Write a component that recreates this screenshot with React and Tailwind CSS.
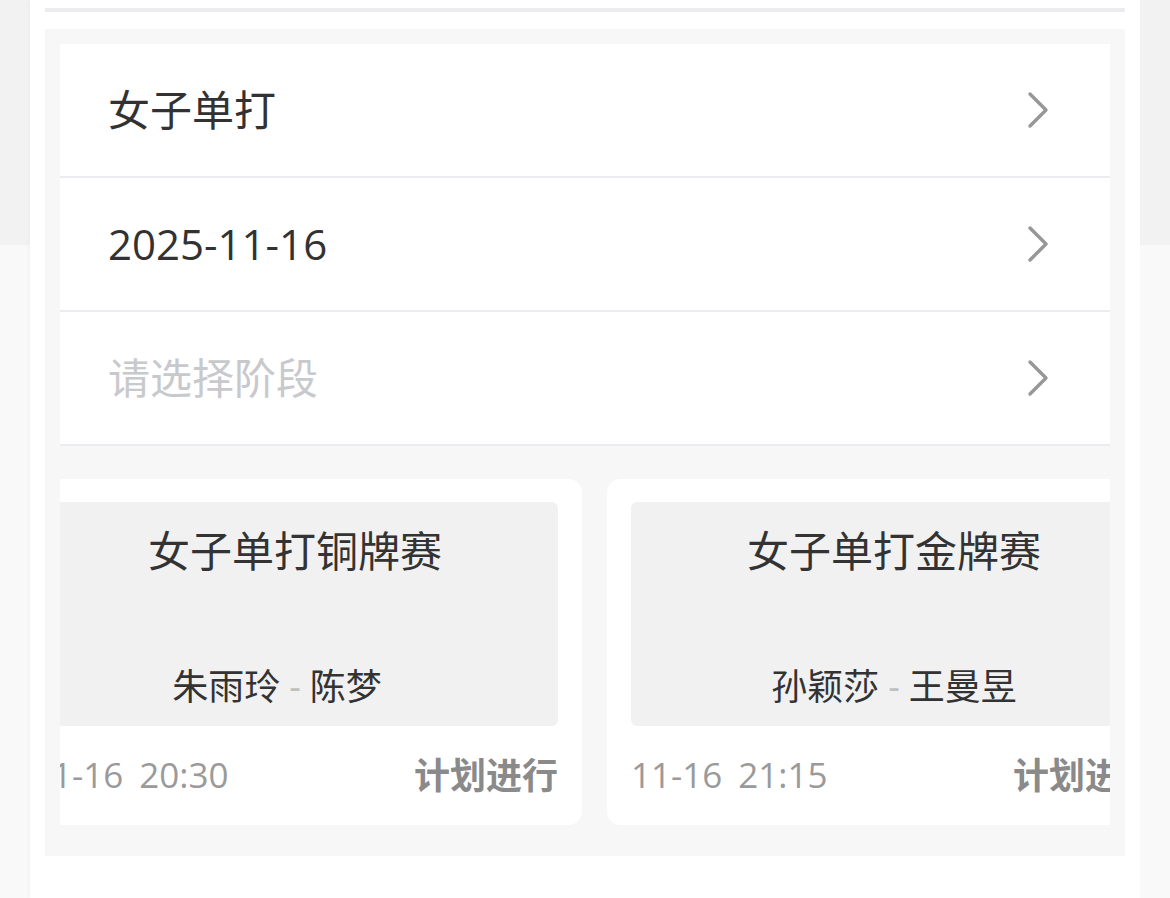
import React from 'react';

const font = { fontFamily: '"Open Sans", "Noto Sans CJK SC", sans-serif' };

const rows = [
  { label: '女子单打', placeholder: false },
  { label: '2025-11-16', placeholder: false },
  { label: '请选择阶段', placeholder: true },
];

const matches = [
  { title: '女子单打铜牌赛', left: '朱雨玲', right: '陈梦', date: '11-16', time: '20:30', status: '计划进行' },
  { title: '女子单打金牌赛', left: '孙颖莎', right: '王曼昱', date: '11-16', time: '21:15', status: '计划进行' },
];

const Chevron = () => (
  <svg width="24" height="40" viewBox="0 0 24 40" fill="none">
    <path d="M4 4 L20 20 L4 36" stroke="#969799" strokeWidth="3.4" strokeLinecap="round" strokeLinejoin="round" />
  </svg>
);

const SideStrip = () => (
  <div className="w-[30px] flex flex-col shrink-0">
    <div className="h-[245px] bg-[#f2f2f3]"></div>
    <div className="flex-1 bg-[#f9f9f9]"></div>
  </div>
);

export default function App() {
  return (
    <div className="flex w-[1170px] h-[898px] overflow-hidden bg-white" style={font}>
      <SideStrip />

      <div className="w-[1110px] min-w-0 shrink-0 bg-white px-[15px] shadow-[0_0_6px_rgba(0,0,0,0.04)]">
        {/* top divider */}
        <div className="mt-[8px] h-[4px] bg-[#ececf0]"></div>

        <div className="mt-[17px] bg-[#f7f7f7] px-[15px] pt-[15px] pb-[31px]">
          {/* picker rows */}
          <div className="bg-white">
            {rows.map((row, i) => (
              <div
                key={i}
                className="h-[134px] flex items-center justify-between pl-[48px] pr-[60px] border-b-2 border-[#ececf0]"
              >
                <span
                  className={`text-[42px] leading-[50px] ${row.placeholder ? 'text-[#c8c9cc]' : 'text-[#323233]'}`}
                >
                  {row.label}
                </span>
                <Chevron />
              </div>
            ))}
          </div>

          {/* match cards, scrolled */}
          <div className="mt-[33px] overflow-hidden">
            <div className="flex gap-[25px] -ml-[52px]">
              {matches.map((m, i) => (
                <div key={i} className="w-[574px] shrink-0 bg-white rounded-[14px] px-[24px] pt-[23px]">
                  <div className="h-[224px] bg-[#f1f1f1] rounded-[6px] flex flex-col justify-between pt-[28px] pb-[21px]">
                    <div className="text-center text-[42px] leading-[42px] text-[#333]">{m.title}</div>
                    <div className="flex items-center text-[36px] leading-[36px] text-[#333]">
                      <span className="flex-1 text-right">{m.left}</span>
                      <span className="px-[9px] text-[#c0c0c0]">-</span>
                      <span className="flex-1 text-left">{m.right}</span>
                    </div>
                  </div>
                  <div className="h-[99px] flex items-center justify-between">
                    <span className="text-[35px] text-[#9a9a9a]">
                      {m.date}
                      <span className="ml-[16px]">{m.time}</span>
                    </span>
                    <span className="text-[36px] font-semibold text-[#8a8a8a]">{m.status}</span>
                  </div>
                </div>
              ))}
            </div>
          </div>
        </div>
      </div>

      <SideStrip />
    </div>
  );
}
